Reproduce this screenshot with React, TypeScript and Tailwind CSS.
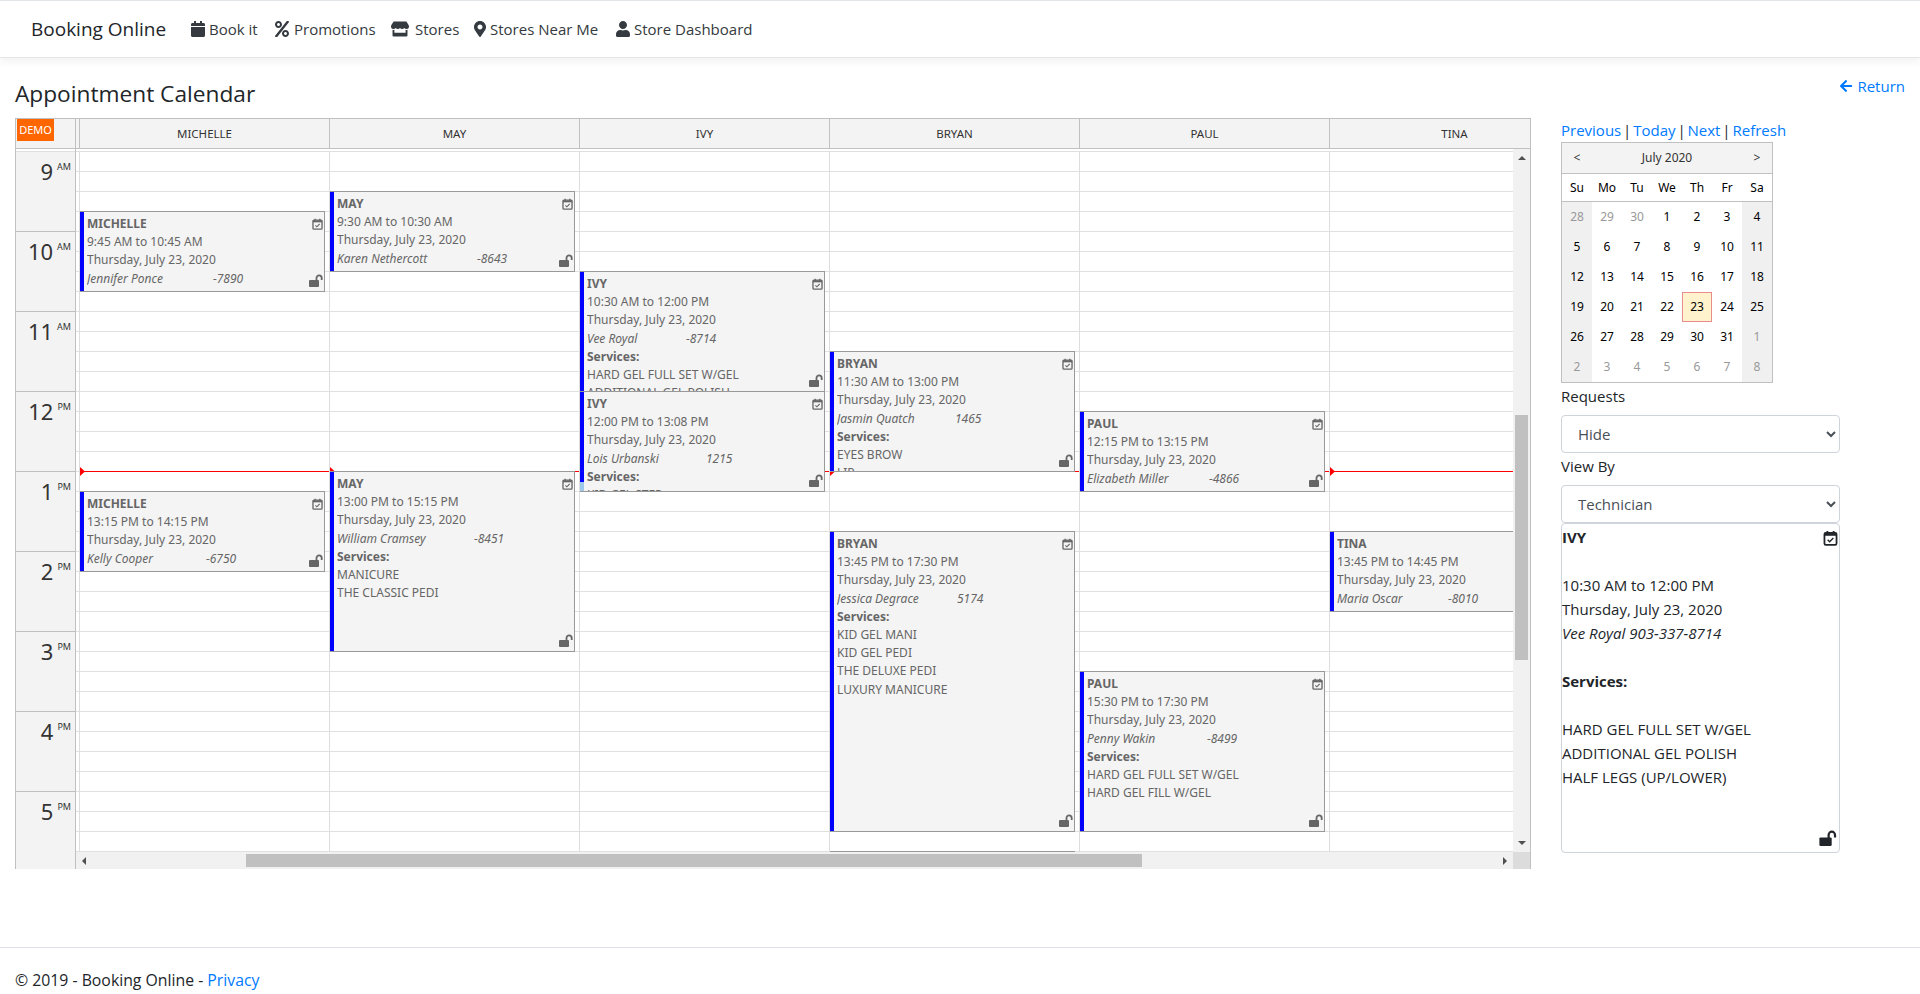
import { FaArrowLeft, FaCalendar, FaMapMarkerAlt, FaPercent, FaStore, FaUser } from "react-icons/fa";

const columns = ["MICHELLE", "MAY", "IVY", "BRYAN", "PAUL", "TINA"];
const hours = [
  ["9", "AM"],
  ["10", "AM"],
  ["11", "AM"],
  ["12", "PM"],
  ["1", "PM"],
  ["2", "PM"],
  ["3", "PM"],
  ["4", "PM"],
  ["5", "PM"],
];

type Appt = {
  col: number;
  start: number;
  end: number;
  barEnd?: number;
  time: string;
  name: string;
  nameWidth: number;
  phone: string;
  services?: string[];
};

// start/end are minutes after 9:00
const appts: Appt[] = [
  { col: 0, start: 45, end: 105, time: "9:45 AM to 10:45 AM", name: "Jennifer Ponce", nameWidth: 126, phone: "-7890" },
  { col: 0, start: 255, end: 315, time: "13:15 PM to 14:15 PM", name: "Kelly Cooper", nameWidth: 119, phone: "-6750" },
  { col: 1, start: 30, end: 90, time: "9:30 AM to 10:30 AM", name: "Karen Nethercott", nameWidth: 140, phone: "-8643" },
  { col: 1, start: 240, end: 375, time: "13:00 PM to 15:15 PM", name: "William Cramsey", nameWidth: 137, phone: "-8451", services: ["MANICURE", "THE CLASSIC PEDI"] },
  { col: 2, start: 90, end: 180, time: "10:30 AM to 12:00 PM", name: "Vee Royal", nameWidth: 99, phone: "-8714", services: ["HARD GEL FULL SET W/GEL", "ADDITIONAL GEL POLISH", "HALF LEGS (UP/LOWER)"] },
  { col: 2, start: 180, end: 255, barEnd: 248, time: "12:00 PM to 13:08 PM", name: "Lois Urbanski", nameWidth: 119, phone: "1215", services: ["KID GEL STEP"] },
  { col: 3, start: 150, end: 240, time: "11:30 AM to 13:00 PM", name: "Jasmin Quatch", nameWidth: 118, phone: "1465", services: ["EYES BROW", "LIP"] },
  { col: 3, start: 285, end: 510, time: "13:45 PM to 17:30 PM", name: "Jessica Degrace", nameWidth: 120, phone: "5174", services: ["KID GEL MANI", "KID GEL PEDI", "THE DELUXE PEDI", "LUXURY MANICURE"] },
  { col: 3, start: 525, end: 585, time: "18:00", name: "", nameWidth: 0, phone: "" },
  { col: 4, start: 195, end: 255, time: "12:15 PM to 13:15 PM", name: "Elizabeth Miller", nameWidth: 122, phone: "-4866" },
  { col: 4, start: 390, end: 510, time: "15:30 PM to 17:30 PM", name: "Penny Wakin", nameWidth: 120, phone: "-8499", services: ["HARD GEL FULL SET W/GEL", "HARD GEL FILL W/GEL"] },
  { col: 5, start: 285, end: 345, time: "13:45 PM to 14:45 PM", name: "Maria Oscar", nameWidth: 111, phone: "-8010" },
];

const px = (min: number) => Math.round((min * 80) / 60);

function CalCheck({ className }: { className: string }) {
  return (
    <svg viewBox="0 0 16 18" className={className} fill="none" stroke="currentColor">
      <rect x="1.2" y="3.2" width="13.6" height="13.6" rx="1.5" strokeWidth="2" />
      <path d="M1 5h14" strokeWidth="3" />
      <path d="M4.5 1v3M11.5 1v3" strokeWidth="2" />
      <path d="M4.8 11l2.2 2.2 4.2-4.2" strokeWidth="1.6" />
    </svg>
  );
}

function OpenLock({ className }: { className: string }) {
  return (
    <svg viewBox="0 0 14 13" className={className}>
      <rect x="0" y="6" width="10" height="7" rx="1" fill="currentColor" />
      <path d="M7.5 7V4a2.6 2.6 0 0 1 5.2 0v2" fill="none" stroke="currentColor" strokeWidth="1.8" />
    </svg>
  );
}

function Event({ a }: { a: Appt }) {
  const h = px(a.end - a.start) + 1;
  return (
    <div
      className="absolute left-0 w-[245px] border border-l-0 border-[#999999] bg-[#f4f4f4] pl-[7px] pt-[3px] pr-6 text-[#666666] z-10 overflow-hidden leading-[18.2px]"
      style={{ top: px(a.start), height: h }}
    >
      <div className="absolute left-0 top-[-1px] bottom-[-1px] w-1 bg-[#9fc9ea]" />
      <div
        className="absolute left-0 top-[-1px] w-1 bg-[#0000ff]"
        style={{ height: a.barEnd ? px(a.barEnd - a.start) : h }}
      />
      {a.name && (
        <div className="h-full overflow-hidden whitespace-nowrap">
          <div className="font-bold">{columns[a.col]}</div>
          <div>{a.time}</div>
          <div>Thursday, July 23, 2020</div>
          <div className="italic flex">
            <span style={{ width: a.nameWidth }}>{a.name}</span>
            <span>{a.phone}</span>
          </div>
          {a.services && <div className="font-bold">Services:</div>}
          {a.services?.map((s) => <div key={s}>{s}</div>)}
        </div>
      )}
      <CalCheck className="absolute right-px top-[6px] w-[11px] h-[12px]" />
      <OpenLock className="absolute right-px bottom-[4px] w-[14px] h-[13px]" />
    </div>
  );
}

function Scheduler() {
  return (
    <div className="w-[1516px] h-[751px] shrink-0 border-t border-l border-r border-[#c0c0c0] overflow-hidden text-[12px] [font-family:'Noto_Sans',sans-serif]">
      {/* header */}
      <div className="flex h-[30px] bg-[#f3f3f3] border-b border-[#c0c0c0] text-[#333333]">
        <div className="w-[60px] shrink-0 border-r border-[#c0c0c0] pl-px">
          <div className="w-[37px] h-[22px] bg-[#ff6600] text-white text-[11px] leading-[22px] text-center">DEMO</div>
        </div>
        <div className="w-[3px] shrink-0" />
        {columns.map((c) => (
          <div key={c} className="w-[250px] shrink-0 border-l border-[#c0c0c0] flex items-center justify-center text-[11.5px]">
            {c}
          </div>
        ))}
      </div>
      <div className="flex h-[720px]">
        {/* hour labels */}
        <div className="w-[60px] shrink-0 bg-[#f3f3f3] border-r border-[#c0c0c0] text-[#333333] overflow-hidden">
          <div className="h-[2px] bg-white" />
          <div className="h-px bg-[#e0e0e0]" />
          {hours.map(([n, ap]) => (
            <div key={n} className="h-20 border-b border-[#c0c0c0] flex justify-end pr-[4px] pt-[4px]">
              <span className="text-[22px] leading-[30px]">{n}</span>
              <span className="text-[9px] leading-[12px] ml-[4px] mt-[5px]">{ap}</span>
            </div>
          ))}
        </div>
        <div className="w-[1454px] shrink-0">
          <div className="flex h-[703px]">
            {/* grid */}
            <div className="w-[1437px] shrink-0 overflow-hidden">
              <div className="h-[2px]" />
              <div className="flex h-[701px]">
                <div className="w-[3px] shrink-0">
                  <div className="h-px bg-[#e0e0e0]" />
                  {Array.from({ length: 35 }, (_, i) => (
                    <div key={i} className="h-5 border-b border-[#e0e0e0]" />
                  ))}
                </div>
                {columns.map((c, ci) => (
                  <div key={c} className="w-[250px] shrink-0 border-l border-[#dddddd] relative">
                    <div className="h-px bg-[#e0e0e0]" />
                    {Array.from({ length: 35 }, (_, i) => (
                      <div key={i} className="h-5 border-b border-[#e0e0e0]" />
                    ))}
                    <div className="absolute left-0 right-0 top-[320px] h-px bg-[#ff0000]" />
                    <svg viewBox="0 0 5 9" className="absolute left-0 top-[316px] w-[5px] h-[9px] text-[#ff0000]">
                      <path d="M0 0l5 4.5L0 9z" fill="currentColor" />
                    </svg>
                    {appts.filter((a) => a.col === ci).map((a) => <Event key={a.time} a={a} />)}
                  </div>
                ))}
              </div>
            </div>
            {/* vertical scrollbar */}
            <div className="w-[17px] shrink-0 bg-[#f1f1f1] flex flex-col items-center relative">
              <svg viewBox="0 0 8 4" className="w-2 h-1 mt-[7px] text-[#505050]"><path d="M4 0l4 4H0z" fill="currentColor" /></svg>
              <div className="w-[13px] h-[245px] bg-[#c0c0c0] mt-[255px]" />
              <div className="flex-1" />
              <svg viewBox="0 0 8 4" className="w-2 h-1 mb-[7px] text-[#505050]"><path d="M4 4l4-4H0z" fill="currentColor" /></svg>
            </div>
          </div>
          {/* horizontal scrollbar */}
          <div className="h-[17px] flex bg-[#f1f1f1] items-center">
            <svg viewBox="0 0 4 8" className="w-1 h-2 ml-[6px] text-[#505050] shrink-0"><path d="M0 4l4-4v8z" fill="currentColor" /></svg>
            <div className="w-[896px] h-[13px] bg-[#c0c0c0] ml-[160px] shrink-0" />
            <div className="flex-1" />
            <svg viewBox="0 0 4 8" className="w-1 h-2 mr-[6px] text-[#505050] shrink-0"><path d="M4 4L0 0v8z" fill="currentColor" /></svg>
            <div className="w-[17px] h-[17px] bg-[#dcdcdc] shrink-0" />
          </div>
        </div>
      </div>
    </div>
  );
}

const days = [
  28, 29, 30, 1, 2, 3, 4, 5, 6, 7, 8, 9, 10, 11, 12, 13, 14, 15, 16, 17, 18, 19, 20, 21, 22, 23, 24, 25, 26, 27, 28, 29, 30, 31, 1, 2, 3, 4, 5, 6, 7, 8,
];

function MiniCalendar() {
  return (
    <div className="w-[212px] h-[241px] border border-[#c0c0c0] text-[12px] text-black [font-family:'Noto_Sans',sans-serif]">
      <div className="h-[30px] bg-[#f3f3f3] flex items-center text-[#333333]">
        <div className="w-[30px] text-center">&lt;</div>
        <div className="flex-1 text-center">July 2020</div>
        <div className="w-[30px] text-center">&gt;</div>
      </div>
      <div className="h-[29px] flex border-t border-b border-[#c0c0c0]">
        {["Su", "Mo", "Tu", "We", "Th", "Fr", "Sa"].map((d) => (
          <div key={d} className="w-[30px] flex items-center justify-center">{d}</div>
        ))}
      </div>
      <div className="grid grid-cols-[repeat(7,30px)] auto-rows-[30px]">
        {days.map((d, i) => {
          const other = i < 3 || i > 33;
          const weekend = i % 7 === 0 || i % 7 === 6;
          const today = i === 25;
          return (
            <div
              key={i}
              className={`flex items-center justify-center ${weekend ? "bg-[#f0f0f0]" : ""} ${other ? "text-[#999999]" : ""} ${today ? "bg-[#fff2cc] border border-[#ea8c8c]" : ""}`}
            >
              {d}
            </div>
          );
        })}
      </div>
    </div>
  );
}

function Select({ value }: { value: string }) {
  return (
    <select
      defaultValue={value}
      className="block w-[279px] h-[38px] px-3 bg-white border border-[#ced4da] rounded text-[#495057] text-[15px]"
    >
      <option>{value}</option>
    </select>
  );
}

function Pipe() {
  return <span className="w-[5px] flex justify-center">|</span>;
}

function SidePanel() {
  return (
    <div className="ml-[30px] w-[279px] shrink-0">
      <div className="h-6 flex gap-[3.5px] whitespace-nowrap">
        <a className="text-[#007bff]">Previous</a>
        <Pipe />
        <a className="text-[#007bff]">Today</a>
        <Pipe />
        <a className="text-[#007bff]">Next</a>
        <Pipe />
        <a className="text-[#007bff]">Refresh</a>
      </div>
      <MiniCalendar />
      <div className="mt-px mb-[7px]">Requests</div>
      <Select value="Hide" />
      <div className="mt-px mb-[7px]">View By</div>
      <Select value="Technician" />
      <div className="relative h-[330px] border border-[#ced4da] rounded pt-px">
        <div className="font-bold">IVY</div>
        <br />
        <div>10:30 AM to 12:00 PM</div>
        <div>Thursday, July 23, 2020</div>
        <div className="italic">Vee Royal 903-337-8714</div>
        <br />
        <div className="font-bold">Services:</div>
        <br />
        <div>HARD GEL FULL SET W/GEL</div>
        <div>ADDITIONAL GEL POLISH</div>
        <div>HALF LEGS (UP/LOWER)</div>
        <CalCheck className="absolute right-px top-[6px] w-[15px] h-4" />
        <OpenLock className="absolute right-[2px] bottom-[6px] w-[18px] h-4" />
      </div>
    </div>
  );
}

export default function App() {
  return (
    <div className="min-h-screen flex flex-col bg-white text-[#212529] text-[15px] leading-6 [font-family:'Open_Sans',sans-serif]">
      <nav className="h-[58px] border-t border-b border-[#e3e6e9] shadow-[0_4px_8px_rgba(0,0,0,0.05)] flex items-center pl-[31px] text-[#343a40]">
        <span className="text-[19px] text-[#212529] w-[160px]">Booking Online</span>
        <a className="flex items-center w-[84px]"><FaCalendar className="w-[14px] h-4 mr-1" />Book it</a>
        <a className="flex items-center w-[116px]"><FaPercent className="w-[14px] h-4 mr-[5px]" />Promotions</a>
        <a className="flex items-center w-[83px]"><FaStore className="w-[18px] h-4 mr-[6px]" />Stores</a>
        <a className="flex items-center w-[142px]"><FaMapMarkerAlt className="w-3 h-4 mr-1" />Stores Near Me</a>
        <a className="flex items-center"><FaUser className="w-[14px] h-4 mr-1" />Store Dashboard</a>
      </nav>
      <div className="flex justify-between px-[15px] h-[60px]">
        <h4 className="text-[22.7px] leading-[29px] mt-[21px]">Appointment Calendar</h4>
        <a className="text-[#007bff] flex items-center h-6 mt-4"><FaArrowLeft className="w-[14px] h-[14px] mr-1" />Return</a>
      </div>
      <div className="flex pl-[15px]">
        <Scheduler />
        <SidePanel />
      </div>
      <footer className="mt-auto h-[47px] border-t border-[#dee2e6] pl-[15px] pt-5 overflow-hidden text-[15.8px]">
        © 2019 - Booking Online - <a className="text-[#007bff]">Privacy</a>
      </footer>
    </div>
  );
}
